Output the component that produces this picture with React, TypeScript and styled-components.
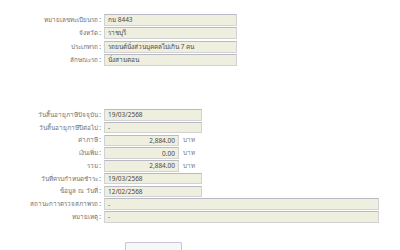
import styled, { createGlobalStyle } from "styled-components";

const GlobalStyle = createGlobalStyle`
    body {
        margin: 0;
        background: #ffffff;
        font-family: Tahoma, "Noto Sans", "DejaVu Sans", sans-serif;
    }
`;

const Page = styled.div`
    width: 400px;
    height: 250px;
    overflow: hidden;
    padding-top: 14px;
    box-sizing: border-box;
`;

const Section = styled.div<{ $space?: number; $gap: number; $row: number }>`
    display: flex;
    flex-direction: column;
    gap: ${(p) => p.$gap}px;
    margin-bottom: ${(p) => p.$space ?? 0}px;

    & > div {
        height: ${(p) => p.$row}px;
    }
`;

const Row = styled.div`
    display: flex;
    align-items: stretch;
`;

const Label = styled.div`
    width: 104px;
    text-align: right;
    font-size: 6.3px;
    color: #707070;
    padding-right: 3px;
    box-sizing: border-box;
    white-space: nowrap;
    display: flex;
    align-items: center;
    justify-content: flex-end;
`;

const Field = styled.div<{ $width: number; $right?: boolean }>`
    width: ${(p) => p.$width}px;
    box-sizing: border-box;
    background: #efefe0;
    border: 1px solid #d2d2d2;
    border-top-color: #b9b9c6;
    font-size: 6.5px;
    color: #4a4a4a;
    padding: 0 3px;
    display: flex;
    align-items: center;
    justify-content: ${(p) => (p.$right ? "flex-end" : "flex-start")};
    white-space: nowrap;
    overflow: hidden;
`;

const Unit = styled.span`
    font-size: 6.3px;
    color: #777777;
    margin-left: 4px;
    display: flex;
    align-items: center;
`;

const ButtonRow = styled.div`
    display: flex;
    padding-left: 125px;
    margin-top: 19px;
`;

const Button = styled.div`
    width: 57px;
    height: 14px;
    box-sizing: border-box;
    border: 1px solid #c9c4dc;
    background: #f7f7f7;
    border-radius: 1px;
`;

const top = [
    ["หมายเลขทะเบียนรถ :", "กม 8443"],
    ["จังหวัด :", "ราชบุรี"],
    ["ประเภทรถ :", "รถยนต์นั่งส่วนบุคคลไม่เกิน 7 คน"],
    ["ลักษณะรถ :", "นั่งสามตอน"],
];

export default function App() {
    return (
        <Page>
            <GlobalStyle />
            <Section $space={43} $gap={1.4} $row={12}>
                {top.map(([label, value]) => (
                    <Row key={label}>
                        <Label>{label}</Label>
                        <Field $width={133}>{value}</Field>
                    </Row>
                ))}
            </Section>
            <Section $gap={1.25} $row={11.5}>
                <Row>
                    <Label>วันสิ้นอายุภาษีปัจจุบัน :</Label>
                    <Field $width={98}>19/03/2568</Field>
                </Row>
                <Row>
                    <Label>วันสิ้นอายุภาษีปีต่อไป :</Label>
                    <Field $width={98}>-</Field>
                </Row>
                <Row>
                    <Label>ค่าภาษี :</Label>
                    <Field $width={75} $right>2,884.00</Field>
                    <Unit>บาท</Unit>
                </Row>
                <Row>
                    <Label>เงินเพิ่ม :</Label>
                    <Field $width={75} $right>0.00</Field>
                    <Unit>บาท</Unit>
                </Row>
                <Row>
                    <Label>รวม :</Label>
                    <Field $width={75} $right>2,884.00</Field>
                    <Unit>บาท</Unit>
                </Row>
                <Row>
                    <Label>วันที่ครบกำหนดชำระ :</Label>
                    <Field $width={98}>19/03/2568</Field>
                </Row>
                <Row>
                    <Label>ข้อมูล ณ วันที่ :</Label>
                    <Field $width={98}>12/02/2568</Field>
                </Row>
                <Row>
                    <Label>สถานะการตรวจสภาพรถ :</Label>
                    <Field $width={275}>-</Field>
                </Row>
                <Row>
                    <Label>หมายเหตุ :</Label>
                    <Field $width={275}>-</Field>
                </Row>
            </Section>
            <ButtonRow>
                <Button />
            </ButtonRow>
        </Page>
    );
}
